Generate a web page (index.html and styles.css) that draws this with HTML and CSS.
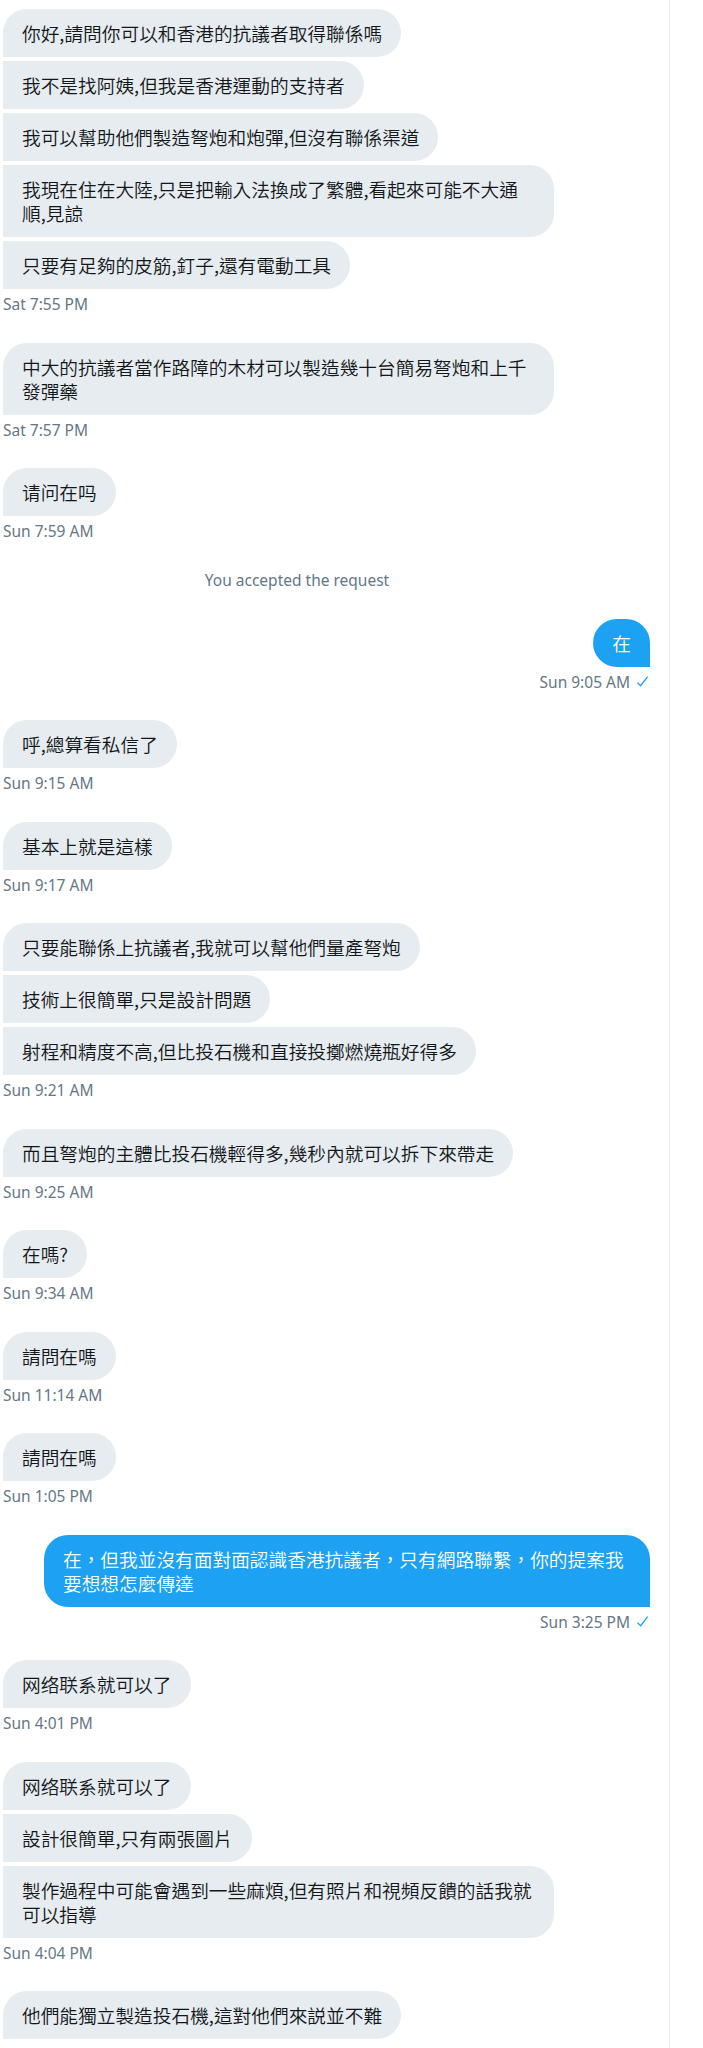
FILE: index.html
```html
<!DOCTYPE html>
<html lang="zh-Hant">
<head>
    <meta charset="UTF-8">
    <meta name="viewport" content="width=device-width, initial-scale=1.0">
    <title>Messages</title>
    <link rel="stylesheet" href="styles.css">
</head>
<body>
    <div class="page">
        <div class="thread">
            <div class="group in">
                <div class="bubble">你好,請問你可以和香港的抗議者取得聯係嗎</div>
                <div class="bubble">我不是找阿姨,但我是香港運動的支持者</div>
                <div class="bubble">我可以幫助他們製造弩炮和炮彈,但沒有聯係渠道</div>
                <div class="bubble">我現在住在大陸,只是把輸入法換成了繁體,看起來可能不大通順,見諒</div>
                <div class="bubble">只要有足夠的皮筋,釘子,還有電動工具</div>
                <div class="time">Sat 7:55 PM</div>
            </div>
            <div class="group in">
                <div class="bubble">中大的抗議者當作路障的木材可以製造幾十台簡易弩炮和上千發彈藥</div>
                <div class="time">Sat 7:57 PM</div>
            </div>
            <div class="group in">
                <div class="bubble">请问在吗</div>
                <div class="time">Sun 7:59 AM</div>
            </div>

            <div class="notice">You accepted the request</div>

            <div class="group out">
                <div class="bubble">在</div>
                <div class="time">Sun 9:05 AM <svg class="check" viewBox="0 0 16 16"><path d="M2.5 9.2 L6 12.5 L13.5 2.8"/></svg></div>
            </div>
            <div class="group in">
                <div class="bubble">呼,總算看私信了</div>
                <div class="time">Sun 9:15 AM</div>
            </div>
            <div class="group in">
                <div class="bubble">基本上就是這樣</div>
                <div class="time">Sun 9:17 AM</div>
            </div>
            <div class="group in">
                <div class="bubble">只要能聯係上抗議者,我就可以幫他們量產弩炮</div>
                <div class="bubble">技術上很簡單,只是設計問題</div>
                <div class="bubble">射程和精度不高,但比投石機和直接投擲燃燒瓶好得多</div>
                <div class="time">Sun 9:21 AM</div>
            </div>
            <div class="group in">
                <div class="bubble">而且弩炮的主體比投石機輕得多,幾秒內就可以拆下來帶走</div>
                <div class="time">Sun 9:25 AM</div>
            </div>
            <div class="group in">
                <div class="bubble">在嗎?</div>
                <div class="time">Sun 9:34 AM</div>
            </div>
            <div class="group in">
                <div class="bubble">請問在嗎</div>
                <div class="time">Sun 11:14 AM</div>
            </div>
            <div class="group in">
                <div class="bubble">請問在嗎</div>
                <div class="time">Sun 1:05 PM</div>
            </div>
            <div class="group out">
                <div class="bubble">在，但我並沒有面對面認識香港抗議者，只有網路聯繫，你的提案我要想想怎麼傳達</div>
                <div class="time">Sun 3:25 PM <svg class="check" viewBox="0 0 16 16"><path d="M2.5 9.2 L6 12.5 L13.5 2.8"/></svg></div>
            </div>
            <div class="group in">
                <div class="bubble">网络联系就可以了</div>
                <div class="time">Sun 4:01 PM</div>
            </div>
            <div class="group in">
                <div class="bubble">网络联系就可以了</div>
                <div class="bubble">設計很簡單,只有兩張圖片</div>
                <div class="bubble">製作過程中可能會遇到一些麻煩,但有照片和視頻反饋的話我就可以指導</div>
                <div class="time">Sun 4:04 PM</div>
            </div>
            <div class="group in">
                <div class="bubble">他們能獨立製造投石機,這對他們來説並不難</div>
            </div>
        </div>
        <div class="side"></div>
    </div>
</body>
</html>
```

FILE: styles.css
```css
body, html {
    margin: 0;
    background-color: #fff;
    font-family: "Noto Sans", "Noto Sans CJK TC", sans-serif;
}
.page {
    display: flex;
    min-height: 2048px;
}
.thread {
    width: 647px;
    padding: 9px 19px 0 3px;
    border-right: 1px solid #e6ecf0;
    display: flex;
    flex-direction: column;
}
.side {
    flex: 1;
}
.group {
    display: flex;
    flex-direction: column;
    gap: 4px;
    margin-bottom: 28.5px;
}
.group.in {
    align-items: flex-start;
}
.group.out {
    align-items: flex-end;
}
.bubble {
    padding: 12px 19px;
    font-family: "Noto Sans CJK TC", sans-serif;
    font-size: 18.7px;
    font-weight: 350;
    line-height: 24px;
    box-sizing: border-box;
}
.in .bubble {
    max-width: 551px;
    background-color: #e6ecf0;
    color: #14171a;
    border-radius: 0 24px 24px 0;
}
.in .bubble:first-child {
    border-top-left-radius: 24px;
}
.out .bubble {
    max-width: 606px;
    background-color: #1da1f2;
    color: #fff;
    border-radius: 24px 24px 0 24px;
}
.time {
    margin-top: 1px;
    font-size: 15.5px;
    line-height: 20px;
    color: #657786;
    display: flex;
    align-items: center;
    gap: 5px;
}
.check {
    width: 15px;
    height: 15px;
    fill: none;
    stroke: #1da1f2;
    stroke-width: 1.4;
}
.notice {
    margin: 0 59px 29px 0;
    text-align: center;
    font-size: 15.5px;
    line-height: 20px;
    color: #657786;
}
```
